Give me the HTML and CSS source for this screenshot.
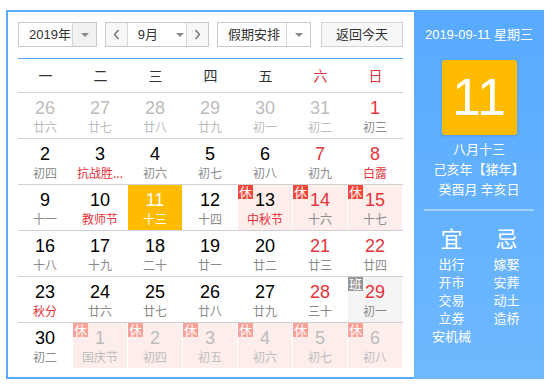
FILE: index.html
```html
<!DOCTYPE html>
<html lang="zh">
<head>
<meta charset="utf-8">
<link rel="stylesheet" href="styles.css">
</head>
<body>
<div class="widget">
  <div class="main">
    <div class="toolbar">
      <div class="select year"><span class="sel-text">2019年</span><span class="sel-arrow"><i class="tri"></i></span></div>
      <div class="month-group">
        <span class="nav"><svg width="7" height="11" viewBox="0 0 7 11"><polyline points="5.5,1 1.5,5.5 5.5,10" fill="none" stroke="#666" stroke-width="1.2"/></svg></span>
        <span class="month"><span class="sel-text">9月</span><i class="tri"></i></span>
        <span class="nav"><svg width="7" height="11" viewBox="0 0 7 11"><polyline points="1.5,1 5.5,5.5 1.5,10" fill="none" stroke="#666" stroke-width="1.2"/></svg></span>
      </div>
      <div class="select holiday"><span class="sel-text">假期安排</span><span class="sel-arrow plain"><i class="tri"></i></span></div>
      <div class="btn">返回今天</div>
    </div>
    <div class="weekhead">
      <span>一</span><span>二</span><span>三</span><span>四</span><span>五</span><span class="red">六</span><span class="red">日</span>
    </div>
    <div class="grid">
      <div class="cell other"><div class="in"><b>26</b><em>廿六</em></div></div>
      <div class="cell other"><div class="in"><b>27</b><em>廿七</em></div></div>
      <div class="cell other"><div class="in"><b>28</b><em>廿八</em></div></div>
      <div class="cell other"><div class="in"><b>29</b><em>廿九</em></div></div>
      <div class="cell other"><div class="in"><b>30</b><em>初一</em></div></div>
      <div class="cell other"><div class="in"><b>31</b><em>初二</em></div></div>
      <div class="cell wk"><div class="in"><b>1</b><em>初三</em></div></div>

      <div class="cell"><div class="in"><b>2</b><em>初四</em></div></div>
      <div class="cell fest"><div class="in"><b>3</b><em>抗战胜...</em></div></div>
      <div class="cell"><div class="in"><b>4</b><em>初六</em></div></div>
      <div class="cell"><div class="in"><b>5</b><em>初七</em></div></div>
      <div class="cell"><div class="in"><b>6</b><em>初八</em></div></div>
      <div class="cell wk"><div class="in"><b>7</b><em>初九</em></div></div>
      <div class="cell wk fest"><div class="in"><b>8</b><em>白露</em></div></div>

      <div class="cell"><div class="in"><b>9</b><em>十一</em></div></div>
      <div class="cell fest"><div class="in"><b>10</b><em>教师节</em></div></div>
      <div class="cell today"><div class="in"><b>11</b><em>十三</em></div></div>
      <div class="cell"><div class="in"><b>12</b><em>十四</em></div></div>
      <div class="cell rest fest"><div class="in"><span class="badge">休</span><b>13</b><em>中秋节</em></div></div>
      <div class="cell rest wk"><div class="in"><span class="badge">休</span><b>14</b><em>十六</em></div></div>
      <div class="cell rest wk"><div class="in"><span class="badge">休</span><b>15</b><em>十七</em></div></div>

      <div class="cell"><div class="in"><b>16</b><em>十八</em></div></div>
      <div class="cell"><div class="in"><b>17</b><em>十九</em></div></div>
      <div class="cell"><div class="in"><b>18</b><em>二十</em></div></div>
      <div class="cell"><div class="in"><b>19</b><em>廿一</em></div></div>
      <div class="cell"><div class="in"><b>20</b><em>廿二</em></div></div>
      <div class="cell wk"><div class="in"><b>21</b><em>廿三</em></div></div>
      <div class="cell wk"><div class="in"><b>22</b><em>廿四</em></div></div>

      <div class="cell fest"><div class="in"><b>23</b><em>秋分</em></div></div>
      <div class="cell"><div class="in"><b>24</b><em>廿六</em></div></div>
      <div class="cell"><div class="in"><b>25</b><em>廿七</em></div></div>
      <div class="cell"><div class="in"><b>26</b><em>廿八</em></div></div>
      <div class="cell"><div class="in"><b>27</b><em>廿九</em></div></div>
      <div class="cell wk"><div class="in"><b>28</b><em>三十</em></div></div>
      <div class="cell work wk"><div class="in"><span class="badge">班</span><b>29</b><em>初一</em></div></div>

      <div class="cell"><div class="in"><b>30</b><em>初二</em></div></div>
      <div class="cell rest other"><div class="in"><span class="badge">休</span><b>1</b><em>国庆节</em></div></div>
      <div class="cell rest other"><div class="in"><span class="badge">休</span><b>2</b><em>初四</em></div></div>
      <div class="cell rest other"><div class="in"><span class="badge">休</span><b>3</b><em>初五</em></div></div>
      <div class="cell rest other"><div class="in"><span class="badge">休</span><b>4</b><em>初六</em></div></div>
      <div class="cell rest other"><div class="in"><span class="badge">休</span><b>5</b><em>初七</em></div></div>
      <div class="cell rest other"><div class="in"><span class="badge">休</span><b>6</b><em>初八</em></div></div>
    </div>
  </div>
  <div class="side">
    <div class="side-date">2019-09-11 星期三</div>
    <div class="bigday">11</div>
    <div class="lunar">
      <div>八月十三</div>
      <div>己亥年【猪年】</div>
      <div>癸酉月 辛亥日</div>
    </div>
    <div class="divider"></div>
    <div class="yiji">
      <div class="col">
        <div class="big">宜</div>
        <div>出行</div><div>开市</div><div>交易</div><div>立券</div><div>安机械</div>
      </div>
      <div class="col">
        <div class="big">忌</div>
        <div>嫁娶</div><div>安葬</div><div>动土</div><div>造桥</div>
      </div>
    </div>
  </div>
</div>
</body>
</html>
```

FILE: styles.css
```css
* { box-sizing: border-box; margin: 0; padding: 0; }
body {
  margin: 0;
  background: #fff;
  font-family: "Liberation Sans", "Noto Sans CJK SC", sans-serif;
  color: #333;
}
.widget {
  display: flex;
  margin: 10px 0 0 6px;
  width: 538px;
  height: 369px;
}
.main {
  width: 408px;
  border: 2px solid #59abff;
  border-right: none;
  padding: 10px 11px 0 10px;
}
.toolbar {
  display: flex;
  height: 25px;
  font-size: 13px;
  color: #333;
}
.select, .month-group, .btn {
  display: flex;
  border: 1px solid #c8c8c8;
  height: 25px;
  align-items: stretch;
}
.sel-text { line-height: 23px; }
.year { width: 79px; }
.year .sel-text { padding-left: 10px; width: 54px; }
.sel-arrow {
  width: 24px;
  border-left: 1px solid #d6d6d6;
  background: #f1f1f1;
  display: flex;
  align-items: center;
  justify-content: center;
}
.sel-arrow.plain { background: #fff; }
.tri {
  display: block;
  width: 0; height: 0;
  border-left: 4px solid transparent;
  border-right: 4px solid transparent;
  border-top: 4px solid #888;
}
.month-group { margin-left: 8px; width: 104px; }
.nav {
  width: 21px;
  background: #f7f7f7;
  display: flex;
  align-items: center;
  justify-content: center;
}
.month {
  width: 61px;
  border-left: 1px solid #d6d6d6;
  border-right: 1px solid #d6d6d6;
  display: flex;
  align-items: center;
  padding-left: 10px;
}
.month .sel-text { width: 38px; }
.holiday { margin-left: 8px; width: 94px; }
.holiday .sel-text { padding-left: 10px; width: 69px; }
.btn {
  margin-left: 10px;
  width: 82px;
  background: #f7f7f7;
  justify-content: center;
  line-height: 23px;
  border-color: #d2d2d2;
}
.weekhead {
  margin-top: 11px;
  border-top: 1px solid #59abff;
  display: grid;
  grid-template-columns: repeat(7, 55px);
  height: 34px;
  font-size: 14px;
  font-family: "Noto Sans CJK SC", sans-serif;
  color: #333;
}
.weekhead span { text-align: center; line-height: 33px; }
.red { color: #e5333b; }
.grid {
  display: grid;
  grid-template-columns: repeat(7, 55px);
}
.cell {
  border-top: 1px solid #d0d0d0;
  padding-right: 1px;
  height: 46px;
}
.in {
  position: relative;
  height: 45px;
  text-align: center;
  padding-top: 6px;
}
.in b {
  display: block;
  font-weight: normal;
  font-size: 18px;
  line-height: 18px;
  color: #000;
  font-family: "Liberation Sans", sans-serif;
}
.in em {
  display: block;
  font-style: normal;
  font-size: 12px;
  line-height: 16px;
  margin-top: 2px;
  color: #8a8a8a;
  font-family: "Noto Sans CJK SC", sans-serif;
  white-space: nowrap;
}
.wk b { color: #e5333b; }
.fest em { color: #e5333b; }
.other b, .other em { color: #bcbcbc; }
.today .in { background: #ffbb00; }
.today b, .today em { color: #fff; }
.rest .in { background: #fdeeec; }
.work .in { background: #f4f4f4; }
.badge {
  position: absolute;
  left: 0; top: 0;
  width: 15px;
  height: 14px;
  line-height: 14px;
  font-size: 13px;
  color: #fff;
  background: #f2473a;
  font-family: "Noto Sans CJK SC", sans-serif;
  text-align: center;
}
.rest.other .badge { background: #f8a198; }
.work .badge { background: #969696; }

.side {
  width: 130px;
  height: 369px;
  background: linear-gradient(#57aaff, #6fb8ff);
  color: #fff;
  display: flex;
  flex-direction: column;
  align-items: center;
  font-family: "Liberation Sans", "Noto Sans CJK SC", sans-serif;
}
.side-date {
  margin-top: 15px;
  font-size: 13px;
  line-height: 20px;
}
.bigday {
  margin-top: 15px;
  width: 75px;
  height: 75px;
  background: #ffbb00;
  border-radius: 3px;
  box-shadow: 0 1px 3px rgba(0,0,0,0.15);
  font-size: 52px;
  line-height: 75px;
  text-align: center;
  font-family: "Liberation Sans", sans-serif;
}
.lunar {
  margin-top: 4px;
  font-size: 13px;
  line-height: 20px;
  text-align: center;
  font-family: "Noto Sans CJK SC", sans-serif;
}
.divider {
  margin-top: 10px;
  width: 110px;
  height: 2px;
  background: #9dd0ff;
}
.yiji {
  margin-top: 13px;
  display: grid;
  grid-template-columns: 55px 55px;
  font-family: "Noto Sans CJK SC", sans-serif;
  font-size: 13px;
  line-height: 18px;
  text-align: center;
}
.yiji .big {
  font-size: 22px;
  line-height: 26px;
  margin-bottom: 5px;
}
```
